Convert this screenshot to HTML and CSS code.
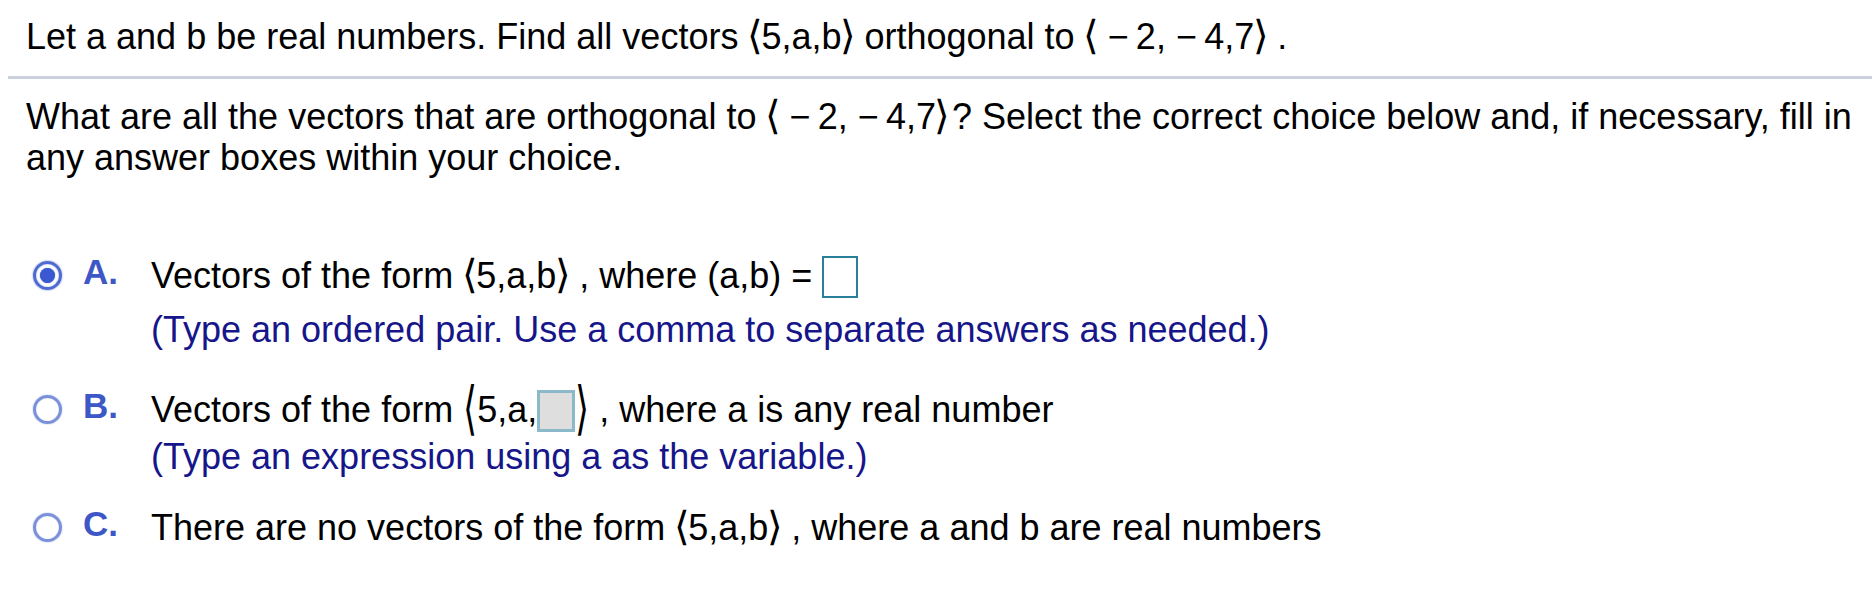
FILE: index.html
```html
<!DOCTYPE html>
<html lang="en">
<head>
<meta charset="utf-8">
<title>Orthogonal vectors</title>
<link rel="stylesheet" href="styles.css">
</head>
<body>
<div class="page">
  <div class="stem">Let a and b be real numbers. Find all vectors <span class="br">⟨</span>5,a,b<span class="br">⟩</span> orthogonal to <span class="br">⟨</span> −&#8201;2, −&#8201;4,7<span class="br">⟩</span> .</div>
  <div class="sep"></div>
  <div class="prompt">What are all the vectors that are orthogonal to <span class="br">⟨</span> −&#8201;2, −&#8201;4,7<span class="br">⟩</span>&#8202;? Select the correct choice below and, if necessary, fill in any answer boxes within your choice.</div>

  <div class="choices">
    <div class="choice choice-a">
      <span class="radio on"></span>
      <span class="letter">A.</span>
      <div class="body">
        <div class="main">Vectors of the form <span class="br">⟨</span>5,a,b<span class="br">⟩</span> , where (a,b) = <span class="box"></span></div>
        <div class="hint">(Type an ordered pair. Use a comma to separate answers as needed.)</div>
      </div>
    </div>

    <div class="choice choice-b">
      <span class="radio"></span>
      <span class="letter">B.</span>
      <div class="body">
        <div class="main">Vectors of the form <span class="br tall">⟨</span>5,a,<span class="box gray"></span><span class="br tall">⟩</span> , where a is any real number</div>
        <div class="hint">(Type an expression using a as the variable.)</div>
      </div>
    </div>

    <div class="choice choice-c">
      <span class="radio"></span>
      <span class="letter">C.</span>
      <div class="body">
        <div class="main">There are no vectors of the form <span class="br">⟨</span>5,a,b<span class="br">⟩</span> , where a and b are real numbers</div>
      </div>
    </div>
  </div>
</div>
</body>
</html>
```

FILE: styles.css
```css
html, body {
  margin: 0;
  padding: 0;
  background: #ffffff;
}

.page {
  width: 1875px;
  height: 611px;
  overflow: hidden;
  font-family: "Liberation Sans", Arial, sans-serif;
  font-size: 36px;
  color: #000000;
}

.br {
  font-family: "DejaVu Sans", "Liberation Sans", sans-serif;
  font-weight: 200;
  font-size: 40px;
  line-height: 0;
  margin: 0 -1.5px;
}

.br.tall {
  display: inline-block;
  line-height: 36px;
  transform: scale(0.9, 1.45);
  margin: 0 -1px;
}

.stem {
  padding: 16px 0 0 26px;
  line-height: 41px;
}

.sep {
  margin: 19px 3px 0 8px;
  height: 3px;
  background: #cbd2dd;
}

.prompt {
  margin-top: 17px;
  padding: 0 0 0 26px;
  line-height: 41px;
}

.choices {
  margin-top: 71px;
}

.choice {
  display: flex;
  align-items: flex-start;
  padding-left: 33px;
}

.choice-b {
  margin-top: 26px;
}

.choice-c {
  margin-top: 24px;
}

.radio {
  flex: none;
  box-sizing: border-box;
  width: 29px;
  height: 29px;
  margin-top: 12px;
  margin-right: 21px;
  border: 3px solid #7a91da;
  border-radius: 50%;
  box-shadow: 0 0 1.5px #8ea0e0, inset 0 0 1px #8ea0e0;
  position: relative;
}

.radio.on {
  border: 3.5px solid #4f6bd2;
  box-shadow: 0 0 2px #6a82d8, inset 0 0 1.5px #6a82d8;
}

.radio.on::after {
  content: "";
  position: absolute;
  left: 3.5px;
  top: 3.5px;
  width: 15px;
  height: 15px;
  border-radius: 50%;
  background: #3a58d0;
  box-shadow: 0 0 1px #3a58d0;
}

.letter {
  flex: none;
  width: 68px;
  font-weight: bold;
  font-size: 35px;
  color: #3d57c6;
  line-height: 46px;
}

.body {
  flex: 1;
}

.main {
  line-height: 54px;
  white-space: nowrap;
}

.hint {
  color: #16168a;
  line-height: 54px;
}

.choice-b .hint {
  line-height: 40px;
}

.box {
  display: inline-block;
  box-sizing: border-box;
  width: 36px;
  height: 42px;
  border: 2.5px solid #2a7f9a;
  background: #ffffff;
  vertical-align: -10px;
}

.box.gray {
  width: 38px;
  height: 42px;
  border: 3px solid #8cb9c9;
  background: #dedede;
  vertical-align: -10px;
}
```
